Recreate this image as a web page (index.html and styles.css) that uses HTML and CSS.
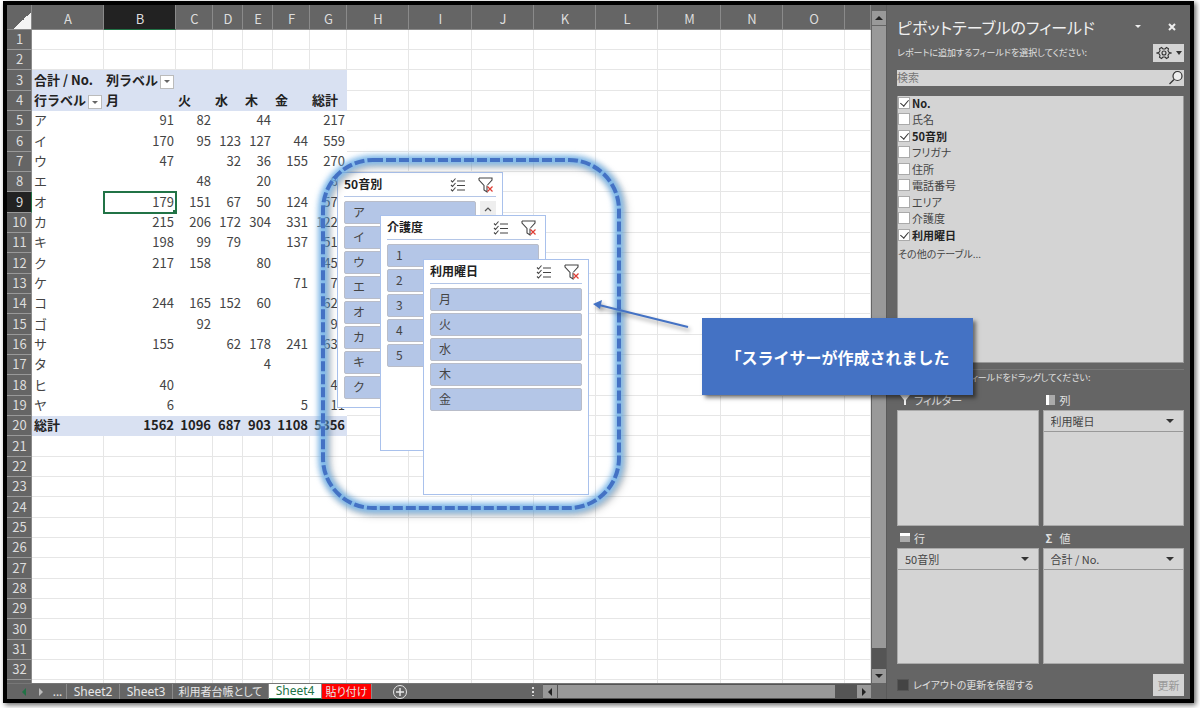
FILE: index.html
```html
<!DOCTYPE html>
<html lang="ja">
<head>
    <meta charset="UTF-8">
    <meta name="viewport" content="width=device-width, initial-scale=1.0">
    <title>ピボットテーブルのフィールド</title>
    <link rel="stylesheet" href="styles.css">
</head>
<body>
    <svg class="defs" width="0" height="0">
        <symbol id="multi" viewBox="0 0 16 14">
            <path d="M1 2.500l1.500 1.500 3-3.500M1 7l1.500 1.500 3-3.500M1 11.500l1.500 1.500 3-3.500M7 3h8M7 7.500h8M7 12h8" fill="none" stroke="#444" stroke-width="1.1"/>
        </symbol>
        <symbol id="clear" viewBox="0 0 16 16">
            <path d="M1 1h13v2L9.500 8M1 1v2l5 5.500V13l3 2V8.500" fill="none" stroke="#444" stroke-width="1.1"/>
            <path d="M9.500 9.500l5 5M14.500 9.500l-5 5" stroke="#e03c32" stroke-width="1.2"/>
        </symbol>
    </svg>

    <div class="window">
        <div class="workbook">
            <div class="sheet">
                <table class="grid">
                    <colgroup id="cols"></colgroup>
                    <thead><tr id="col-names"></tr></thead>
                    <tbody id="rows"></tbody>
                </table>

                <section class="slicer slicer-kana">
                    <header>
                        <h2>50音別</h2>
                        <button class="icon" aria-label="複数選択"><svg width="16" height="14"><use href="#multi"/></svg></button>
                        <button class="icon" aria-label="フィルターのクリア"><svg width="16" height="16"><use href="#clear"/></svg></button>
                    </header>
                    <div class="slicer-body">
                        <div class="items">
                            <button>ア</button>
                            <button>イ</button>
                            <button>ウ</button>
                            <button>エ</button>
                            <button>オ</button>
                            <button>カ</button>
                            <button>キ</button>
                            <button>ク</button>
                        </div>
                        <button class="slicer-up" aria-label="上へ"><svg width="8" height="6"><path d="M1 5l3-3 3 3" fill="none" stroke="#555" stroke-width="1.2"/></svg></button>
                    </div>
                </section>

                <section class="slicer slicer-care">
                    <header>
                        <h2>介護度</h2>
                        <button class="icon" aria-label="複数選択"><svg width="16" height="14"><use href="#multi"/></svg></button>
                        <button class="icon" aria-label="フィルターのクリア"><svg width="16" height="16"><use href="#clear"/></svg></button>
                    </header>
                    <div class="slicer-body">
                        <div class="items">
                            <button>1</button>
                            <button>2</button>
                            <button>3</button>
                            <button>4</button>
                            <button>5</button>
                        </div>
                    </div>
                </section>

                <section class="slicer slicer-day">
                    <header>
                        <h2>利用曜日</h2>
                        <button class="icon" aria-label="複数選択"><svg width="16" height="14"><use href="#multi"/></svg></button>
                        <button class="icon" aria-label="フィルターのクリア"><svg width="16" height="16"><use href="#clear"/></svg></button>
                    </header>
                    <div class="slicer-body">
                        <div class="items">
                            <button>月</button>
                            <button>火</button>
                            <button>水</button>
                            <button>木</button>
                            <button>金</button>
                        </div>
                    </div>
                </section>

                <svg class="marks" width="400" height="380">
                    <rect class="glow" x="16" y="15" width="296" height="348" rx="50"/>
                    <rect class="dashes" x="16" y="15" width="296" height="348" rx="50"/>
                    <g class="arrow">
                        <path d="M381 182L292 160" stroke="#4472c4" stroke-width="2"/>
                        <path d="M286 159l9-4-2 9z" fill="#4472c4"/>
                    </g>
                </svg>
            </div>

            <div class="tab-bar">
                <span class="tab-nav"><svg width="4" height="8"><path d="M4 0v8L0 4z" fill="#217346"/></svg></span>
                <span class="tab-nav"><svg width="4" height="8"><path d="M0 0v8l4-4z" fill="#bbb"/></svg></span>
                <button class="tab more">...</button>
                <button class="tab">Sheet2</button>
                <button class="tab">Sheet3</button>
                <button class="tab kanji">利用者台帳として</button>
                <button class="tab active">Sheet4</button>
                <button class="tab red">貼り付け</button>
                <button class="add" aria-label="新しいシート"><svg width="16" height="16"><circle cx="8" cy="8" r="6.500" fill="none" stroke="#e8e8e8"/><path d="M8 4v8M4 8h8" stroke="#e8e8e8" stroke-width="1.500"/></svg></button>
                <span class="grip"></span>
                <div class="scroll-h">
                    <button aria-label="左へ"><svg width="4" height="8"><path d="M4 0v8L0 4z" fill="#222"/></svg></button>
                    <div class="thumb"></div>
                    <div class="rest"></div>
                    <button aria-label="右へ"><svg width="4" height="8"><path d="M0 0v8l4-4z" fill="#222"/></svg></button>
                </div>
            </div>
        </div>

        <div class="scroll-v">
            <button aria-label="上へ"><svg width="8" height="4"><path d="M0 4h8L4 0z" fill="#222"/></svg></button>
            <div class="thumb"></div>
            <div class="rest"></div>
            <button aria-label="下へ"><svg width="8" height="4"><path d="M0 0h8L4 4z" fill="#222"/></svg></button>
        </div>

        <aside class="panel">
            <div class="panel-title">
                <h1>ピボットテーブルのフィールド</h1>
                <button aria-label="オプション"><svg width="6" height="4"><path d="M0 0h6L3 3z" fill="#eee"/></svg></button>
                <button aria-label="閉じる"><svg width="8" height="8"><path d="M1 1l6 6M7 1L1 7" stroke="#eee" stroke-width="2"/></svg></button>
            </div>
            <div class="panel-sub">
                <p>レポートに追加するフィールドを選択してください:</p>
                <button class="gear" aria-label="ツール">
                    <svg width="16" height="16" viewBox="0 0 16 16" fill="none" stroke="#333" stroke-width="1.100"><path d="M5.500 2.500L7 4h2l1.500-1.500 2 1.200-.5 2 1 1.600 2 .7-2 .7-1 1.600.5 2-2 1.200L9 12H7l-1.500 1.500-2-1.200.5-2-1-1.600L1 8l2-.7 1-1.600-.5-2z"/><circle cx="8" cy="8" r="2"/></svg>
                    <svg width="6" height="4"><path d="M0 0h6L3 4z" fill="#333"/></svg>
                </button>
            </div>
            <div class="search">
                <input type="text" placeholder="検索" aria-label="検索">
                <svg width="16" height="16"><circle cx="9.500" cy="6" r="4.500" fill="#eee" stroke="#333" stroke-width="1.200"/><path d="M6 9.500L1.500 14" stroke="#333" stroke-width="1.300"/></svg>
            </div>
            <div class="field-list">
                <ul>
                    <li><label><input type="checkbox" checked>No.</label></li>
                    <li><label><input type="checkbox">氏名</label></li>
                    <li><label><input type="checkbox" checked>50音別</label></li>
                    <li><label><input type="checkbox">フリガナ</label></li>
                    <li><label><input type="checkbox">住所</label></li>
                    <li><label><input type="checkbox">電話番号</label></li>
                    <li><label><input type="checkbox">エリア</label></li>
                    <li><label><input type="checkbox">介護度</label></li>
                    <li><label><input type="checkbox" checked>利用曜日</label></li>
                </ul>
                <a href="#">その他のテーブル...</a>
            </div>
            <p class="drag-hint">次のボックス間でフィールドをドラッグしてください:</p>
            <div class="areas">
                <div class="area">
                    <h3><svg width="10" height="10"><path d="M0 0h10L6 5v5H4V5z" fill="#eee"/></svg>フィルター</h3>
                    <div class="drop"></div>
                </div>
                <div class="area">
                    <h3><svg width="10" height="10"><path d="M0 0h3v10H0z" fill="#fff"/><path d="M3 0h6v10H3z" fill="#aaa"/></svg>列</h3>
                    <div class="drop">
                        <div class="picker"><select aria-label="列"><option>利用曜日</option></select></div>
                    </div>
                </div>
                <div class="area">
                    <h3><svg width="10" height="10"><path d="M0 0h10v3H0z" fill="#fff"/><path d="M0 3h10v6H0z" fill="#aaa"/></svg>行</h3>
                    <div class="drop">
                        <div class="picker"><select aria-label="行"><option>50音別</option></select></div>
                    </div>
                </div>
                <div class="area">
                    <h3><span class="sigma">Σ</span>値</h3>
                    <div class="drop">
                        <div class="picker"><select aria-label="値"><option>合計 / No.</option></select></div>
                    </div>
                </div>
            </div>
            <div class="panel-foot">
                <label><input type="checkbox">レイアウトの更新を保留する</label>
                <button disabled>更新</button>
            </div>
        </aside>

        <div class="callout">「スライサーが作成されました</div>
    </div>
    <script src="script.js"></script>
</body>
</html>
```

FILE: styles.css
```css
* {
    box-sizing: border-box;
}
body {
    margin: 0;
    padding: 1px 6px 5px 3px;
    height: 100vh;
    background-color: #fff;
    font-family: "Noto Sans CJK JP", sans-serif;
    font-size: 13px;
    color: #444;
    overflow: hidden;
}
button, input, select {
    font: inherit;
    color: inherit;
    margin: 0;
    padding: 0;
    border: none;
    border-radius: 0;
}
button {
    display: flex;
    align-items: center;
    justify-content: center;
    background: none;
    cursor: pointer;
}
h1, h2, h3, p, ul {
    margin: 0;
    padding: 0;
    font-weight: normal;
}
.defs {
    position: absolute;
}
.window {
    position: relative;
    display: flex;
    height: 100%;
    border: 4px solid #000;
    background-color: #656565;
    box-shadow: 2px 2px 5px rgba(0, 0, 0, 0.6);
}
.workbook {
    flex: 1;
    min-width: 0;
    display: flex;
    flex-direction: column;
}

/* sheet */
.sheet {
    position: relative;
    flex: 1;
    min-height: 0;
    overflow: hidden;
    background-color: #fff;
}
.grid {
    width: 100%;
    table-layout: fixed;
    border-collapse: separate;
    border-spacing: 0;
}
.grid th, .grid td {
    height: 20px;
    padding: 0 1px 1px 2px;
    line-height: 18px;
    font-weight: normal;
    white-space: nowrap;
    overflow: hidden;
}
.grid tbody tr:nth-child(3n) > * {
    height: 21px;
}
.grid thead th {
    height: 25px;
    padding-top: 4px;
    background-color: #656565;
    color: #ddd;
    border-right: 1px solid #8a8a8a;
    border-bottom: 1px solid #8a8a8a;
}
.grid tbody th {
    background-color: #656565;
    color: #ddd;
    border-right: 1px solid #8a8a8a;
    border-bottom: 1px solid #999;
}
.grid .corner {
    background-image: linear-gradient(135deg, transparent 50%, #f4f4f4 50%);
    background-size: 17px 17px;
    background-position: right bottom;
    background-repeat: no-repeat;
}
.grid thead th.current {
    background-color: #222;
    border-bottom-color: #217346;
}
.grid tbody th.current {
    background-color: #222;
    border-right-color: #217346;
}
.grid td {
    border-right: 1px solid #e6e6e6;
    border-bottom: 1px solid #e6e6e6;
    text-align: right;
}
.grid td.pivot {
    border-color: transparent;
}
.grid td:nth-child(2), .grid .head td {
    text-align: left;
}
.grid .head .pivot, .grid .total .pivot {
    background-color: #d9e1f2;
    color: #222;
    font-weight: bold;
}
.grid td.selected {
    position: relative;
    overflow: visible;
    outline: 2px solid #217346;
    outline-offset: -1px;
}
.grid td.selected::after {
    content: "";
    position: absolute;
    right: -2px;
    bottom: -2px;
    width: 4px;
    height: 4px;
    background-color: #217346;
}
.with-filter {
    display: flex;
    align-items: center;
    justify-content: space-between;
    height: 18px;
}
.with-filter button {
    width: 14px;
    height: 14px;
    margin-top: 4px;
    border: 1px solid #bbb;
    background-color: #fff;
}

/* slicers float over the cells */
.slicer {
    position: absolute;
    width: 166px;
    height: 236px;
    padding: 0 6px;
    border: 1px solid #a9c1ec;
    background-color: #fff;
}
.slicer-kana {
    left: 330px;
    top: 167px;
}
.slicer-care {
    left: 373px;
    top: 210px;
}
.slicer-day {
    left: 416px;
    top: 254px;
}
.slicer header {
    display: flex;
    align-items: center;
    gap: 12px;
    height: 24px;
    padding-right: 2px;
    border-bottom: 1px solid #b4c6e7;
}
.slicer h2 {
    flex: 1;
    padding-bottom: 2px;
    font-size: 12px;
    line-height: 20px;
    font-weight: bold;
    color: #222;
}
.slicer-body {
    display: flex;
    align-items: flex-start;
    gap: 4px;
    padding-top: 4px;
}
.items {
    flex: 1;
    display: flex;
    flex-direction: column;
    gap: 2px;
}
.items button {
    height: 23px;
    padding: 0 0 2px 8px;
    justify-content: flex-start;
    font-size: 12px;
    border: 1px solid #b9bdc9;
    border-radius: 2px;
    background-color: #b4c6e7;
}
.slicer-up {
    width: 16px;
    height: 16px;
    background-color: #eee;
}
.marks {
    position: absolute;
    left: 300px;
    top: 140px;
}
.glow {
    fill: none;
    stroke: #6db4f0;
    stroke-width: 8;
    filter: blur(3px) drop-shadow(3px 3px 2px rgba(0, 0, 0, 0.3));
}
.dashes {
    fill: none;
    stroke: #4472c4;
    stroke-width: 4;
    stroke-dasharray: 10 3;
}
.arrow {
    filter: drop-shadow(2px 3px 2px rgba(0, 0, 0, 0.4));
}

/* sheet tabs */
.tab-bar {
    display: flex;
    align-items: stretch;
    height: 16px;
    border-top: 1px solid #777;
    color: #e8e8e8;
}
.tab-nav {
    width: 17px;
    display: flex;
    align-items: center;
    justify-content: center;
}
.tab-nav:first-child {
    margin-left: 8px;
}
.tab {
    width: 53px;
    font-family: "Noto Sans", "Noto Sans CJK JP", sans-serif;
    font-size: 12px;
    line-height: 14px;
    border-right: 1px solid #8a8a8a;
    white-space: nowrap;
}
.tab.more {
    width: 18px;
}
.tab.kanji {
    width: 96px;
}
.tab.kanji, .tab.red {
    font-size: 11px;
    font-feature-settings: "palt";
}
.tab.active {
    background-color: #fff;
    color: #217346;
    border-bottom: 1px solid #217346;
}
.tab.red {
    width: 50px;
    background-color: #f00;
}
.add {
    width: 16px;
    margin-left: 20px;
}
.grip {
    width: 2px;
    margin: 3px 9px 3px auto;
    background-image: linear-gradient(#ddd 50%, transparent 50%);
    background-size: 2px 4px;
}
.scroll-h {
    width: 328px;
    padding: 1px 0;
    display: flex;
    background-color: #555;
}
.scroll-h button {
    width: 14px;
    background-color: #999;
}
.scroll-h .thumb {
    flex: 1;
    margin-left: 1px;
    background-color: #999;
}
.scroll-h .rest {
    width: 22px;
}
.scroll-v {
    width: 15px;
    display: flex;
    flex-direction: column;
    padding: 6px 0 16px 1px;
}
.scroll-v button {
    height: 14px;
    background-color: #999;
}
.scroll-v .thumb {
    flex: 1;
    margin-top: 1px;
    background-color: #999;
}
.scroll-v .rest {
    height: 21px;
    background-color: #555;
}

/* field panel */
.panel {
    width: 304px;
    display: flex;
    flex-direction: column;
    padding: 10px 6px 3px 10px;
    border-left: 1px solid #5a5a5a;
    color: #e0e0e0;
    font-size: 11px;
    font-feature-settings: "palt";
}
.panel-title {
    display: flex;
    align-items: center;
    height: 24px;
}
.panel-title h1 {
    flex: 1;
    font-size: 16px;
    line-height: 24px;
    color: #f0f0f0;
}
.panel-title button {
    width: 44px;
}
.panel-title button:last-child {
    width: 24px;
}
.panel-sub {
    display: flex;
    align-items: center;
    justify-content: space-between;
    height: 18px;
    margin-top: 5px;
}
.panel-sub p, .drag-hint {
    font-size: 9px;
    line-height: 16px;
}
.gear {
    width: 31px;
    height: 18px;
    gap: 4px;
    background-color: #d4d4d4;
}
.search {
    display: flex;
    align-items: center;
    height: 16px;
    margin-top: 8px;
    background-color: #d4d4d4;
}
.search input {
    flex: 1;
    height: 16px;
    padding-bottom: 2px;
    background: none;
    color: #333;
}
.search input::placeholder {
    color: #777;
}
.field-list {
    flex: 1;
    margin-top: 10px;
    border: 1px solid #999;
    border-top: none;
    background-color: #d4d4d4;
    color: #444;
}
.field-list ul {
    list-style: none;
}
.field-list li {
    height: 16px;
}
.field-list li:nth-child(even) {
    height: 17px;
}
.field-list label, .panel-foot label {
    display: flex;
    align-items: center;
    gap: 2px;
    height: 14px;
    line-height: 14px;
}
.field-list label:has(:checked) {
    font-weight: bold;
    color: #222;
}
.field-list a {
    display: block;
    margin-top: 2px;
    font-size: 10px;
    line-height: 16px;
    color: inherit;
    text-decoration: none;
}
input[type="checkbox"] {
    appearance: none;
    width: 12px;
    height: 12px;
    border: 1px solid #aaa;
    background-color: #fff;
}
input[type="checkbox"]:checked::after {
    content: "";
    display: block;
    width: 4px;
    height: 7px;
    margin: 0 3px;
    border: solid #333;
    border-width: 0 1px 1px 0;
    transform: rotate(40deg);
}
.drag-hint {
    margin-top: 6px;
    padding-bottom: 2px;
    border-top: 1px solid #777;
}
.areas {
    display: grid;
    grid-template-columns: 1fr 1fr;
    gap: 0 4px;
}
.area h3 {
    display: flex;
    align-items: center;
    gap: 4px;
    height: 22px;
    padding: 2px 0 0 3px;
    font-size: 11px;
}
.sigma {
    width: 10px;
    font-weight: bold;
}
.drop {
    height: 116px;
    border: 1px solid #aaa;
    background-color: #d4d4d4;
}
.picker {
    position: relative;
    border-bottom: 1px solid #999;
    color: #444;
}
.picker select {
    display: block;
    width: 100%;
    height: 20px;
    padding-left: 7px;
    appearance: none;
    background: none;
}
.picker::after {
    content: "";
    position: absolute;
    right: 9px;
    top: 8px;
    border: 4px solid transparent;
    border-top-color: #333;
    border-bottom: none;
}
.panel-foot {
    display: flex;
    align-items: center;
    justify-content: space-between;
    height: 22px;
    margin-top: 10px;
}
.panel-foot label {
    gap: 4px;
    font-size: 10px;
}
.panel-foot input {
    border-color: #555;
    background-color: #444;
}
.panel-foot button {
    width: 31px;
    height: 22px;
    background-color: #d4d4d4;
    color: #999;
}

.callout {
    position: absolute;
    left: 695px;
    top: 313px;
    width: 271px;
    height: 77px;
    display: flex;
    align-items: center;
    justify-content: center;
    background-color: #4472c4;
    color: #fff;
    font-size: 16px;
    line-height: 20px;
    font-weight: bold;
    box-shadow: 3px 3px 4px rgba(0, 0, 0, 0.5);
}
```

FILE: script.js
```javascript
const names = 'ABCDEFGHIJKLMNO'.split('').concat('');
const widths = [72, 72, 37, 30, 30, 37, 37, 62, 63, 62, 62, 62, 63, 62, 62];
const lastRow = 32;

const pivot = {
    3: ['合計 / No.', '列ラベル', '', '', '', '', ''],
    4: ['行ラベル', '月', '火', '水', '木', '金', '総計'],
    5: ['ア', 91, 82, '', 44, '', 217],
    6: ['イ', 170, 95, 123, 127, 44, 559],
    7: ['ウ', 47, '', 32, 36, 155, 270],
    8: ['エ', '', 48, '', 20, '', 68],
    9: ['オ', 179, 151, 67, 50, 124, 571],
    10: ['カ', 215, 206, 172, 304, 331, 1228],
    11: ['キ', 198, 99, 79, '', 137, 513],
    12: ['ク', 217, 158, '', 80, '', 455],
    13: ['ケ', '', '', '', '', 71, 71],
    14: ['コ', 244, 165, 152, 60, '', 621],
    15: ['ゴ', '', 92, '', '', '', 92],
    16: ['サ', 155, '', 62, 178, 241, 636],
    17: ['タ', '', '', '', 4, '', 4],
    18: ['ヒ', 40, '', '', '', '', 40],
    19: ['ヤ', 6, '', '', '', 5, 11],
    20: ['総計', 1562, 1096, 687, 903, 1108, 5356]
};

const filterButton = '<button aria-label="フィルター"><svg width="6" height="3"><path d="M0 0h6L3 3z" fill="#666"/></svg></button>';

document.getElementById('cols').innerHTML =
    '<col width="25">' + widths.map(w => `<col width="${w}">`).join('') + '<col>';

document.getElementById('col-names').innerHTML =
    '<th class="corner"></th>' +
    names.map(n => `<th${n === 'B' ? ' class="current"' : ''}>${n}</th>`).join('');

// one unnumbered row fills the strip above the tabs
let html = '';
for (let r = 1; r <= lastRow + 1; r++) {
    const data = pivot[r];
    let rowClass = '';
    if (r === 3 || r === 4) rowClass = 'head';
    if (r === 20) rowClass = 'total';
    html += `<tr class="${rowClass}"><th${r === 9 ? ' class="current"' : ''}>${r <= lastRow ? r : ''}</th>`;
    names.forEach((n, c) => {
        if (!data || c > 6) {
            html += '<td></td>';
            return;
        }
        const selected = r === 9 && c === 1;
        let text = data[c];
        if (text === '列ラベル' || text === '行ラベル') {
            text = `<div class="with-filter">${text}${filterButton}</div>`;
        }
        html += `<td class="pivot${selected ? ' selected' : ''}">${text}</td>`;
    });
    html += '</tr>';
}
document.getElementById('rows').innerHTML = html;
```
